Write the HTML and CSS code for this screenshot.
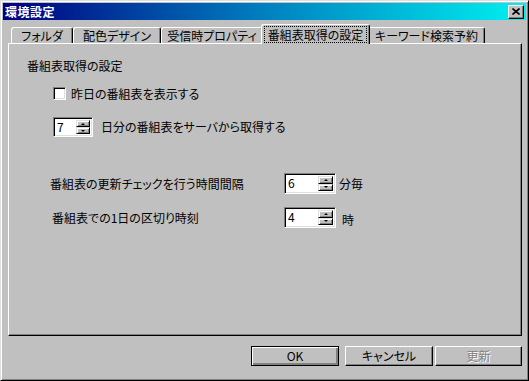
FILE: index.html
```html
<!DOCTYPE html>
<html lang="ja">

<head>
    <meta charset="UTF-8">
    <title>環境設定</title>
    <link rel="stylesheet" href="styles.css">
</head>

<body>
    <div class="window">
        <div class="titlebar">
            <span class="title">環境設定</span>
            <span class="close-btn">
                <svg width="8" height="7" viewBox="0 0 8 7">
                    <path d="M0.5 0.5 L7.5 6.5 M7.5 0.5 L0.5 6.5" stroke="#000" stroke-width="1.6" fill="none"/>
                </svg>
            </span>
        </div>

        <div class="tabs">
            <div class="tab tab-folder">フォルダ</div>
            <div class="tab tab-color">配色デザイン</div>
            <div class="tab tab-recv">受信時プロパティ</div>
            <div class="tab tab-active"><span class="focus">番組表取得の設定</span></div>
            <div class="tab tab-keyword">キーワード検索予約</div>
        </div>

        <div class="panel">
            <div class="group-title">番組表取得の設定</div>

            <div class="check-row">
                <span class="checkbox"></span>
                <span>昨日の番組表を表示する</span>
            </div>

            <div class="days-row">
                <div class="spin spin-small">
                    <span class="spin-value">7</span>
                    <span class="spin-arrows"><span class="arrow up"></span><span class="arrow down"></span></span>
                </div>
                <span class="days-label">日分の番組表をサーバから取得する</span>
            </div>

            <div class="field-row interval-row">
                <span class="field-label">番組表の更新チェックを行う時間間隔</span>
                <div class="spin spin-wide">
                    <span class="spin-value">6</span>
                    <span class="spin-arrows"><span class="arrow up"></span><span class="arrow down"></span></span>
                </div>
                <span class="unit">分毎</span>
            </div>

            <div class="field-row cutoff-row">
                <span class="field-label">番組表での1日の区切り時刻</span>
                <div class="spin spin-wide">
                    <span class="spin-value">4</span>
                    <span class="spin-arrows"><span class="arrow up"></span><span class="arrow down"></span></span>
                </div>
                <span class="unit unit-hour">時</span>
            </div>
        </div>

        <div class="buttons">
            <span class="btn btn-default">OK</span>
            <span class="btn btn-cancel">キャンセル</span>
            <span class="btn btn-disabled">更新</span>
        </div>
    </div>
</body>

</html>
```

FILE: styles.css
```css
body {
    margin: 0;
    padding: 0;
    background-color: #c0c0c0;
    font-family: 'Noto Sans CJK JP', 'Liberation Sans', sans-serif;
    font-size: 12px;
    font-feature-settings: "palt";
    color: #000;
}

.window {
    width: 529px;
    height: 381px;
    box-sizing: border-box;
    background-color: #c0c0c0;
    border: 1px solid;
    border-color: #dfdfdf #000 #000 #dfdfdf;
    box-shadow: inset 1px 1px #fff, inset -1px -1px #808080;
    padding: 2px;
    display: flex;
    flex-direction: column;
}

.titlebar {
    height: 17px;
    background: linear-gradient(to right, #000080, #0080c0 50%, #00f0f0);
    display: flex;
    align-items: center;
    justify-content: space-between;
    padding: 0 2px 0 2px;
}

.title {
    color: #fff;
    font-weight: bold;
    font-size: 12px;
    line-height: 14px;
    letter-spacing: 0.5px;
}

.close-btn {
    width: 16px;
    height: 14px;
    box-sizing: border-box;
    background-color: #c0c0c0;
    border: 1px solid;
    border-color: #fff #000 #000 #fff;
    box-shadow: inset -1px -1px #808080;
    display: flex;
    align-items: center;
    justify-content: center;
    padding-right: 1px;
}

.close-btn svg {
    display: block;
}

/* tab strip */
.tabs {
    position: relative;
    z-index: 2;
    display: flex;
    align-items: flex-end;
    height: 19px;
    margin-top: 4px;
    padding-left: 8px;
}

.tab {
    height: 16px;
    box-sizing: border-box;
    border: 1px solid;
    border-bottom: none;
    border-color: #fff #000 #000 #fff;
    border-radius: 3px 3px 0 0;
    box-shadow: inset -1px 0 #808080;
    display: flex;
    align-items: center;
    justify-content: center;
    line-height: 14px;
    white-space: nowrap;
}

.tab-folder { width: 62px; }
.tab-color { width: 88px; }
.tab-recv { width: 102px; }
.tab-keyword { width: 117px; }

.tab-active {
    width: 109px;
    height: 20px;
    margin: 0 -2px -1px -2px;
    background-color: #c0c0c0;
    position: relative;
    z-index: 3;
}

.focus {
    outline: 1px dotted #000;
    padding: 1px 3px 0 3px;
    line-height: 14px;
}

/* tab page */
.panel {
    width: 514px;
    height: 293px;
    box-sizing: border-box;
    margin-left: 5px;
    border: 1px solid;
    border-color: #fff #000 #000 #fff;
    box-shadow: inset -1px -1px #808080;
    padding-top: 15px;
    line-height: 14px;
}

.group-title {
    padding-left: 18px;
    height: 14px;
}

.check-row {
    display: flex;
    align-items: center;
    gap: 5px;
    margin: 14px 0 0 44px;
    height: 13px;
}

.checkbox {
    width: 13px;
    height: 13px;
    box-sizing: border-box;
    background-color: #fff;
    border: 1px solid;
    border-color: #808080 #fff #fff #808080;
    box-shadow: inset 1px 1px #000, inset -1px -1px #dfdfdf;
}

.days-row {
    display: flex;
    align-items: center;
    margin: 17px 0 0 44px;
    height: 20px;
}

.days-label {
    margin-left: 8px;
}

.field-row {
    display: flex;
    align-items: center;
    height: 21px;
}

.interval-row {
    margin: 36px 0 0 41px;
}

.interval-row .field-label {
    width: 234px;
}

.cutoff-row {
    margin: 13px 0 0 43px;
}

.cutoff-row .field-label {
    width: 232px;
}

.unit {
    margin-left: 3px;
}

.unit-hour {
    margin-left: 6px;
    margin-top: 4px;
}

/* spin box */
.spin {
    height: 20px;
    box-sizing: border-box;
    background-color: #fff;
    border: 1px solid;
    border-color: #808080 #fff #fff #808080;
    box-shadow: inset 1px 1px #000, inset -1px -1px #dfdfdf;
    padding: 2px 2px 2px 2px;
    display: flex;
}

.spin-small { width: 40px; }
.spin-wide { width: 52px; height: 21px; }

.spin-value {
    flex: 1;
    padding-left: 1px;
    line-height: 14px;
}

.spin-arrows {
    width: 15px;
    display: flex;
    flex-direction: column;
}

.spin-small .spin-arrows {
    width: 14px;
}

.arrow {
    flex: 1;
    box-sizing: border-box;
    background-color: #c0c0c0;
    border: 1px solid;
    border-color: #dfdfdf #000 #000 #dfdfdf;
    box-shadow: inset 1px 1px #fff, inset -1px -1px #808080;
    display: flex;
    align-items: center;
    justify-content: center;
}

.arrow::after {
    content: "";
    width: 0;
    height: 0;
    border-left: 2px solid transparent;
    border-right: 2px solid transparent;
}

.arrow.up::after {
    border-bottom: 2px solid #000;
}

.arrow.down::after {
    border-top: 2px solid #000;
}

/* dialog buttons */
.buttons {
    display: flex;
    justify-content: flex-end;
    margin-top: 10px;
    padding-right: 4px;
}

.btn {
    width: 88px;
    height: 20px;
    box-sizing: border-box;
    border: 1px solid;
    border-color: #fff #000 #000 #fff;
    box-shadow: inset -1px -1px #808080;
    display: flex;
    align-items: center;
    justify-content: center;
    line-height: 14px;
}

.btn-default {
    border-color: #000;
    box-shadow: inset 1px 1px #fff, inset -1px -1px #808080, inset -2px -2px #808080;
}

.btn-cancel {
    margin-left: 6px;
}

.btn-disabled {
    width: 87px;
    margin-left: 2px;
    color: #808080;
    text-shadow: 1px 1px #fff;
}
```
